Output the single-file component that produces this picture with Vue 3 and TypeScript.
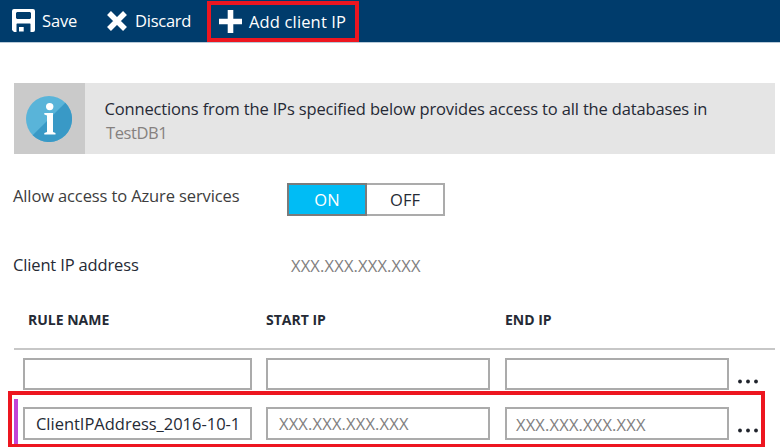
<script setup lang="ts">
import { ref } from 'vue'

interface Rule {
  name: string
  start: string
  end: string
  active: boolean
}

const allowAzure = ref(true)
const rules = ref<Rule[]>([
  { name: '', start: '', end: '', active: false },
  { name: 'ClientIPAddress_2016-10-1', start: 'XXX.XXX.XXX.XXX', end: 'XXX.XXX.XXX.XXX', active: true },
])
</script>

<template>
  <div class="blade">
    <header class="toolbar">
      <button class="command save">
        <svg width="23" height="23" viewBox="0 0 23 23">
          <path fill="#fff" fill-rule="evenodd" d="M2 0H21Q23 0 23 2V21Q23 23 21 23H2L0 21V2Q0 0 2 0ZM5 3L4 4V9L5 10H18L19 9V4L18 3ZM5 14.500L4.500 15V23H18.500V15L18 14.500Z" />
          <path fill="#fff" d="M7 18h4.700v4.500H7z" />
        </svg>
        <span class="label">Save</span>
      </button>
      <button class="command discard">
        <svg width="20" height="20" viewBox="0 0 20 20">
          <path d="M2 2L18 18M18 2L2 18" fill="none" stroke="#fff" stroke-width="5.500" />
        </svg>
        <span class="label">Discard</span>
      </button>
      <button class="command add">
        <svg width="23" height="23" viewBox="0 0 23 23">
          <path fill="#fff" d="M8.700 0h5.600v8.700H23v5.600h-8.700V23H8.700v-8.700H0V8.700h8.700z" />
        </svg>
        <span class="label">Add client IP</span>
      </button>
    </header>

    <section class="notice">
      <div class="notice-icon">
        <svg width="46" height="46" viewBox="0 0 46 46">
          <circle cx="23" cy="23" r="23" fill="#59b4d9" />
          <path fill="#3999c6" d="M39.300 6.700A23 23 0 0 1 6.700 39.300Z" />
          <circle cx="23.700" cy="10.600" r="3.700" fill="#fff" />
          <path fill="#fff" d="M18.300 17H27V36l2.500 1v1.400H18.300V37l2.700-1V19.500l-2.700-1z" />
        </svg>
      </div>
      <div class="notice-text">
        <div class="message">Connections from the IPs specified below provides access to all the databases in</div>
        <div class="database">TestDB1</div>
      </div>
    </section>

    <div class="field access">
      <span class="field-label">Allow access to Azure services</span>
      <div class="toggle">
        <button :class="{ selected: allowAzure }" @click="allowAzure = true">ON</button>
        <button :class="{ selected: !allowAzure }" @click="allowAzure = false">OFF</button>
      </div>
    </div>
    <div class="field address">
      <span class="field-label">Client IP address</span>
      <span class="ip">XXX.XXX.XXX.XXX</span>
    </div>

    <section class="rules">
      <div class="row head">
        <span>RULE NAME</span><span>START IP</span><span>END IP</span>
      </div>
      <div v-for="(rule, i) in rules" :key="i" class="row" :class="{ active: rule.active }">
        <div class="box name">{{ rule.name }}</div>
        <div class="box"><span class="ip">{{ rule.start }}</span></div>
        <div class="box end"><span class="ip">{{ rule.end }}</span></div>
        <svg class="more" width="20" height="5" viewBox="0 0 20 5">
          <circle cx="2" cy="2.500" r="1.900" /><circle cx="10" cy="2.500" r="1.900" /><circle cx="18" cy="2.500" r="1.900" />
        </svg>
      </div>
    </section>
  </div>
</template>

<style>
body { margin: 0; background: #fff; }
</style>

<style scoped>
* { box-sizing: border-box; }
.blade {
  width: 780px;
  height: 447px;
  overflow: hidden;
  background: #fff;
  color: #252a35;
  font: 16.5px/24px "Open Sans", "Noto Sans", sans-serif;
  letter-spacing: -0.15px;
  white-space: nowrap;
}
button { font: inherit; letter-spacing: inherit; color: inherit; border: 0; background: none; padding: 0; margin: 0; }
.toolbar {
  height: 43px;
  display: flex;
  align-items: flex-start;
  background: #003c6c;
  border-bottom: 1px solid #b9cad8;
}
.command { display: flex; align-items: center; height: 41px; color: #fff; }
.label { padding-top: 1px; }
.save { margin-left: 12px; width: 95px; gap: 7px; }
.discard { width: 100px; gap: 8px; letter-spacing: -0.25px; }
.add { margin-top: 1px; width: 152px; border: 4px solid #ed1620; padding-left: 8px; gap: 7px; letter-spacing: 0.15px; }
.add .label { padding-top: 0; }
.notice { margin: 40px 0 0 14px; width: 761px; height: 71px; display: flex; background: #e5e5e5; }
.notice-icon { width: 71px; background: #cacaca; padding: 13px 0 0 12px; }
.notice-text { padding: 14px 0 0 19.500px; }
.database { padding-left: 1.500px; color: #85817f; letter-spacing: -0.4px; }
.field { display: flex; margin-left: 13px; }
.field-label { width: 274px; }
.access { margin-top: 29px; height: 54px; color: #3d3d3d; }
.access .field-label { padding-top: 1px; letter-spacing: -0.12px; }
.toggle { display: flex; width: 158px; height: 33px; color: #252a35; letter-spacing: 0; }
.toggle button { flex: 1; border: 2px solid #ababab; border-left: 0; padding-top: 1px; }
.toggle button.selected { flex: 0 0 80px; color: #fff; background: #00bcf5; border: 2px solid #7b7b7b; }
.address { margin-top: 16px; }
.address .ip { padding: 1px 0 0 4px; }
.ip { color: #81807f; letter-spacing: 0.15px; }
.rules { margin-top: 31px; }
.row { display: grid; grid-template-columns: 229px 225px 225px 20px; column-gap: 14px; padding-left: 23px; }
.head {
  grid-template-columns: 224px 225px 225px;
  margin-left: 14px;
  width: 761px;
  padding-left: 14px;
  height: 41px;
  border-bottom: 2px solid #c7c7c7;
  font-size: 14px;
  line-height: 22px;
  letter-spacing: 0;
  font-weight: 700;
}
.row:not(.head) { height: 41px; padding-top: 8px; }
.box { width: 224px; height: 32px; border: 2px solid #ababab; padding: 3px 0 0 11px; }
.box.name { width: 229px; letter-spacing: -0.02px; }
.box.end { padding: 4px 0 0 9px; }
.row .more { margin: 21px 0 0 -6px; fill: #20242c; }
.row.active:not(.head) {
  height: 56px;
  margin-left: 8px;
  width: 757px;
  border: 4px solid #ed1620;
  border-bottom-width: 3px;
  padding: 12px 0 0 11px;
  background: linear-gradient(#c344d6, #c344d6) 2px 4px / 4px 45px no-repeat;
}
.active .box { height: 33px; }
</style>
